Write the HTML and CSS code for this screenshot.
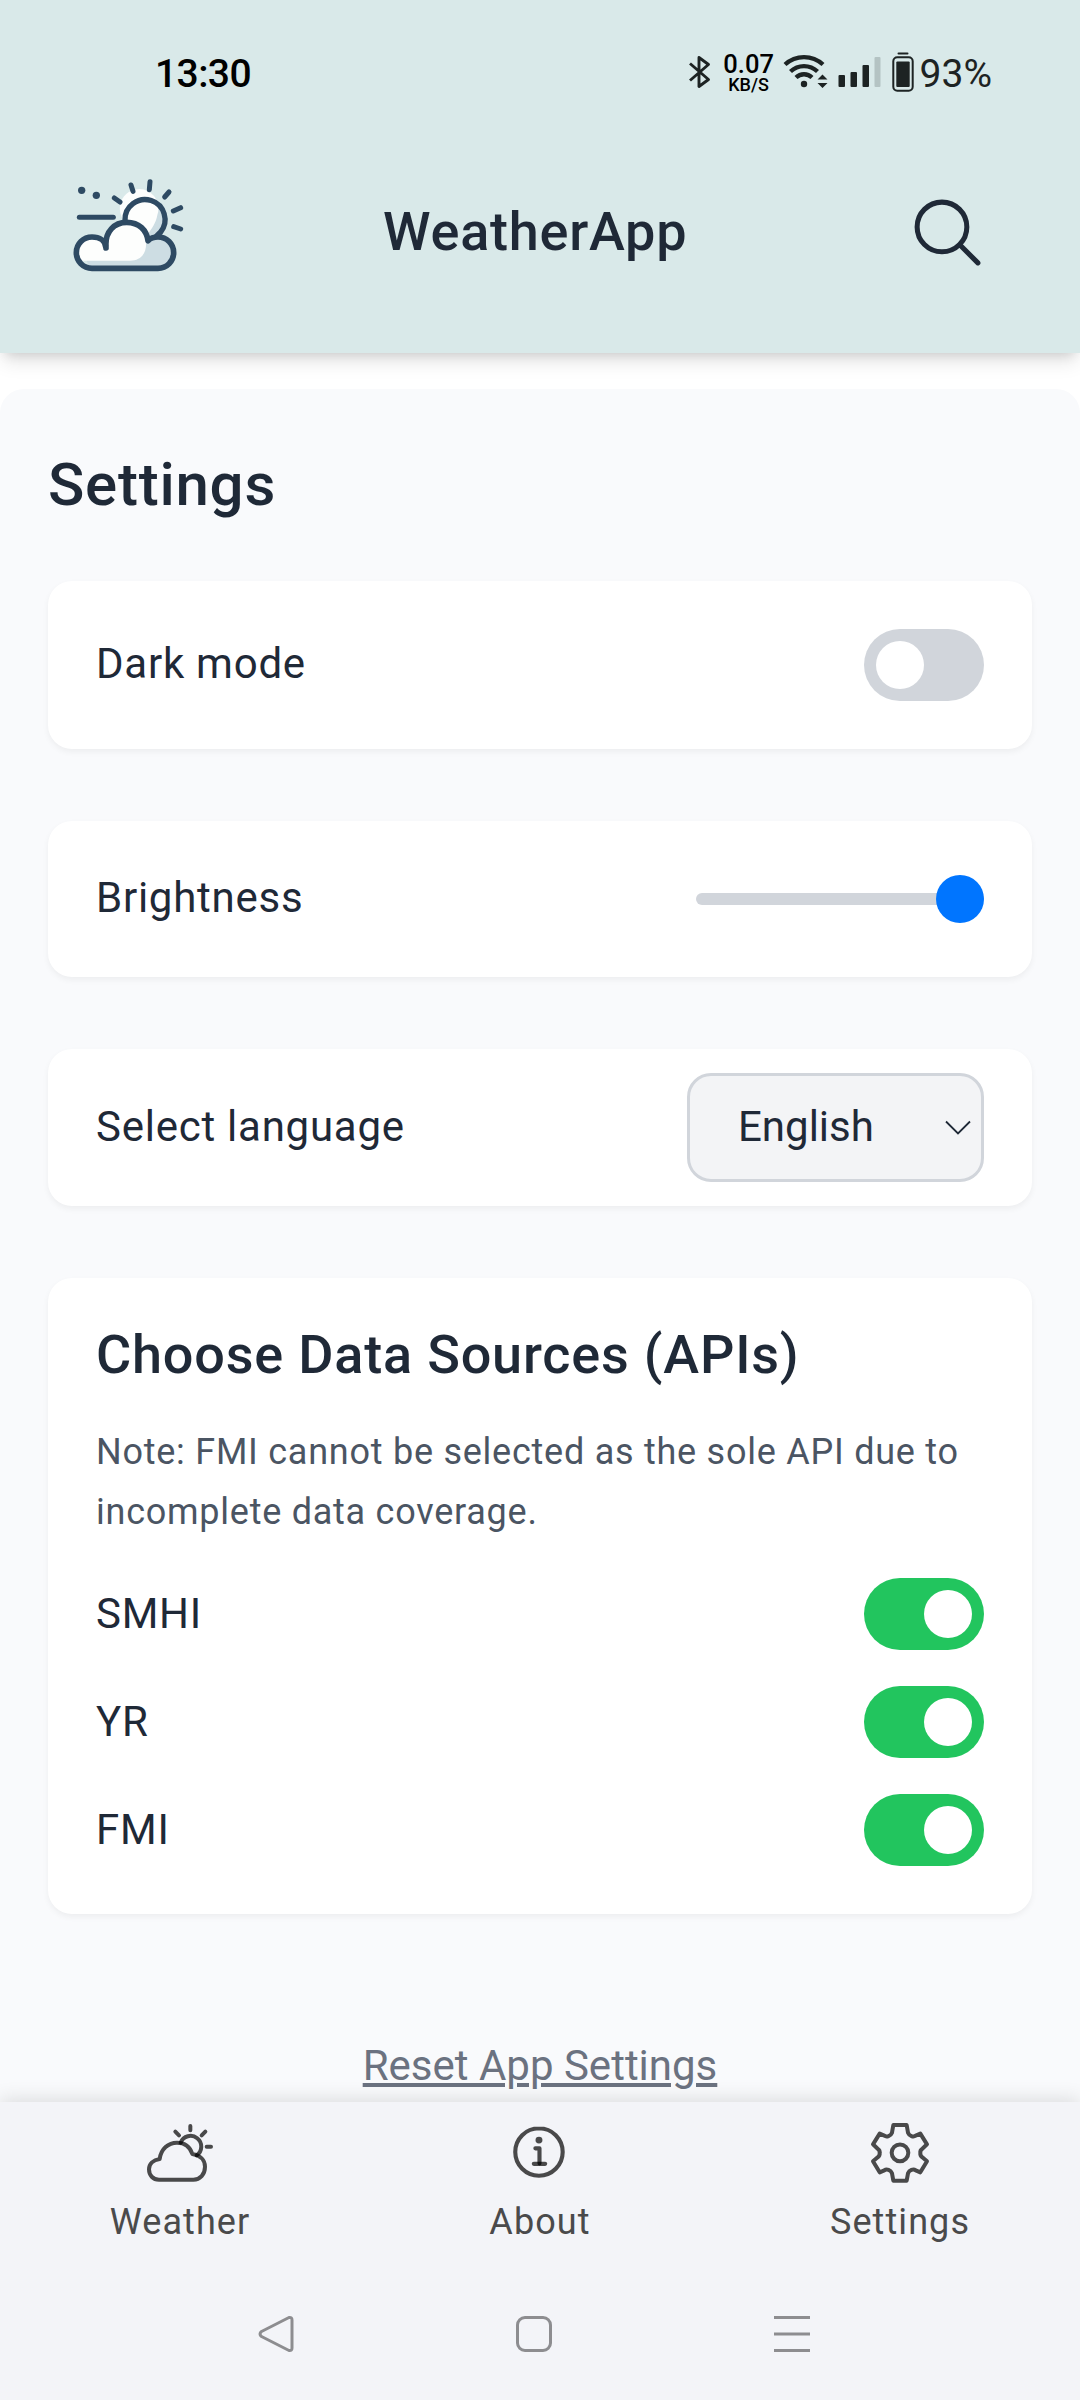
FILE: index.html
```html
<!DOCTYPE html>
<html lang="en">
<head>
<meta charset="utf-8">
<title>WeatherApp</title>
<link rel="stylesheet" href="styles.css">
</head>
<body>
<div class="app">
  <header class="header">
    <div class="status">
      <span class="time">13:30</span>
      <div class="indicators">
        <svg class="bluetooth" width="24" height="36" viewBox="0 0 24 36" fill="none" stroke="#1d2323" stroke-width="2.900" stroke-linejoin="round"><path d="M2 9.500 20.500 25.500 11 32.500V3.500L20.500 10.500 2 26.500"/></svg>
        <div class="rate"><span class="rate-value">0.07</span><span class="rate-unit">KB/S</span></div>
        <svg class="wifi" width="46" height="36" viewBox="0 0 46 36" fill="none" stroke="#1d2323" stroke-width="4.300"><path d="M2 11.500A28 28 0 0 1 40 11.500M7.500 18.500A19.500 19.500 0 0 1 34.500 18.500M13 24.500A11.500 11.500 0 0 1 29 24.500"/><circle cx="21" cy="31" r="3.200" fill="#1d2323" stroke="none"/><path d="M34.500 26.500 39.500 21.500 44.500 26.500ZM34.500 30 39.500 35 44.500 30Z" fill="#1d2323" stroke="none"/></svg>
        <svg class="signal" width="44" height="32" viewBox="0 0 44 32" fill="#1d2323"><rect x="0.500" y="19" width="6.500" height="12" rx="1"/><rect x="12.500" y="16" width="6.500" height="15" rx="1"/><rect x="24.500" y="9" width="6.500" height="22" rx="1"/><rect x="36.500" y="1" width="6" height="30" rx="1" fill="#b4c3c3"/></svg>
        <svg class="battery" width="22" height="40" viewBox="0 0 22 40"><rect x="5.500" y="0.500" width="11" height="2" rx="1" fill="#1d2323"/><rect x="1.300" y="5.300" width="19.400" height="33.400" rx="4" fill="none" stroke="#1d2323" stroke-width="2"/><rect x="4.300" y="9.500" width="13.400" height="25.500" rx="1" fill="#1d2323"/></svg>
        <span class="percent">93%</span>
      </div>
    </div>
    <div class="topbar">
      <svg class="logo" viewBox="0 0 480 390" fill="none" stroke="#2e4a63" stroke-width="17" stroke-linecap="round" stroke-linejoin="round">
        <circle cx="283" cy="177" r="62" fill="#cddde3" stroke="none"/>
        <path d="M225 185A58 58 0 1 1 322 165C318 190 304 207 294 222Z" fill="#fdfefd" stroke="none"/>
        <path d="M294 242C302 233 312 230 324 230A47 47 0 0 1 324 325H124A47 47 0 0 1 167 245C170 211 194 187 230 187C268 187 290 211 294 242Z" fill="#cddde3" stroke="none"/>
        <path d="M85 302C70 264 93 233 124 232C145 232 158 242 167 255C166 213 190 187 230 187C260 187 280 203 288 243C291 276 276 302 240 302Z" fill="#fdfefd" stroke="none"/>
        <path d="M168 264C167 242 148 231 126 231A47 47 0 0 0 126 325H324A47 47 0 0 0 324 231C312 231 302 234 294 242C290 211 268 187 230 187C193 187 165 215 168 258"/>
        <path d="M225 181A60 60 0 1 1 332 216L320 228" stroke-width="16"/>
        <path d="M88 172H190" stroke-width="15"/>
        <path d="M193 114 210 126M243 75 249 94M300 65 298 89M357 96 344 111M392 143 370 153M371 200 392 207" stroke-width="15"/>
        <circle cx="95" cy="91" r="11" fill="#2e4a63" stroke="none"/><circle cx="139" cy="106" r="11" fill="#2e4a63" stroke="none"/>
      </svg>
      <h1 class="brand">WeatherApp</h1>
      <svg class="search" viewBox="0 0 512 512" fill="none" stroke="#1f2937" stroke-width="32" stroke-linecap="round"><circle cx="221.100" cy="221.100" r="157.100"/><path d="M338.300 338.300 448 448"/></svg>
    </div>
  </header>

  <main class="panel">
    <h2 class="page-title">Settings</h2>
    <section class="card row">
      <span class="label">Dark mode</span>
      <span class="toggle"><span class="knob"></span></span>
    </section>
    <section class="card row">
      <span class="label">Brightness</span>
      <span class="slider"><span class="thumb"></span></span>
    </section>
    <section class="card row language">
      <span class="label">Select language</span>
      <div class="select"><span class="value">English</span>
        <svg width="26" height="16" viewBox="0 0 26 16" fill="none" stroke="#1f2937" stroke-width="1.800"><path d="M1 1.500 13 13.500 25 1.500"/></svg>
      </div>
    </section>
    <section class="card sources">
      <h3 class="card-title">Choose Data Sources (APIs)</h3>
      <p class="note">Note: FMI cannot be selected as the sole API due to incomplete data coverage.</p>
      <div class="source-list">
        <div class="row"><span class="label">SMHI</span><span class="toggle on"><span class="knob"></span></span></div>
        <div class="row"><span class="label">YR</span><span class="toggle on"><span class="knob"></span></span></div>
        <div class="row"><span class="label">FMI</span><span class="toggle on"><span class="knob"></span></span></div>
      </div>
    </section>
    <a class="reset">Reset App Settings</a>
  </main>

  <footer class="bottom">
    <nav class="tabs">
      <div class="tab">
        <svg class="tab-icon" viewBox="201 120 198 198"><path d="M340 299H237C219 299 207 286 207 268C207 251 220 240 239 237C243 207 265 188 291 188C316 188 331 203 337 222C361 226 375 240 375 260C375 283 360 299 340 299Z"/><path d="M302 188A32 32 0 1 1 350 226"/><path d="M331 138V151M286 155 297 166M376 155 365 166M380 200H393"/></svg>
        <span>Weather</span>
      </div>
      <div class="tab">
        <svg class="tab-icon about" viewBox="0 0 512 512"><path d="M248 64C146.400 64 64 146.400 64 248s82.400 184 184 184 184-82.400 184-184S349.600 64 248 64z"/><path d="M220 220h32v116"/><path d="M208 340h88"/><circle class="dot" cx="248" cy="156" r="27"/></svg>
        <span>About</span>
      </div>
      <div class="tab">
        <svg class="tab-icon" viewBox="921 120 198 198"><path d="M1000 135H1040Q1043 152 1044 158C1048 168 1060 172 1067 167L1081 161 1101 193 1087 206Q1080 210 1081 219Q1080 227 1087 232L1101 244 1081 277 1067 271C1060 266 1048 270 1044 280L1040 302H1000L996 280C992 270 980 266 973 271L959 277 939 244 953 232Q960 227 959 219Q960 210 953 206L939 193 959 161 973 167C980 172 992 168 996 158Z"/><circle cx="1020" cy="218.500" r="25"/></svg>
        <span>Settings</span>
      </div>
    </nav>
    <div class="system">
      <svg width="36" height="38" viewBox="0 0 36 38"><path d="M31 2.500 3.500 16.500Q0.500 19 3.500 21.500L31 35.500Q34 36 34 33V5Q34 2 31 2.500Z"/></svg>
      <svg width="36" height="36" viewBox="0 0 36 36"><rect x="1.500" y="1.500" width="33" height="33" rx="7.500"/></svg>
      <svg width="36" height="36" viewBox="0 0 36 36"><path d="M0 1.500H36M0 18H36M0 34.500H36"/></svg>
    </div>
  </footer>
</div>
</body>
</html>
```
FILE: styles.css
```css
* { box-sizing: border-box; }
body {
  margin: 0;
  background: #fff;
  font-family: Roboto, "Noto Sans", sans-serif;
  color: #1f2937;
}
h1, h2, h3, p { margin: 0; }
h1, h2, h3 { font-weight: 500; }
svg { display: block; flex: none; }

.app { display: flex; flex-direction: column; width: 1080px; height: 2400px; overflow: hidden; }

.header {
  flex: none;
  height: 353px;
  background: #d9e9e9;
  box-shadow: 0 12px 18px -3px rgba(0, 0, 0, .1), 0 6px 12px -6px rgba(0, 0, 0, .16);
}
.status {
  display: flex;
  justify-content: space-between;
  height: 144px;
  padding: 0 88px 0 155px;
}
.time { margin-top: 51px; font-size: 39px; line-height: 46px; font-weight: 500; letter-spacing: -.600px; color: #000; }
.indicators { display: flex; align-items: flex-start; color: #1d2323; }
.bluetooth { margin-top: 54px; }
.rate { display: flex; flex-direction: column; align-items: center; width: 50px; margin: 52px 9px 0 12px; color: #000; font-weight: 500; }
.rate-value { font-size: 25.500px; line-height: 25px; }
.rate-unit { font-size: 18px; line-height: 15px; }
.wifi { margin: 53px 9px 0 0; }
.signal { margin: 56px 10px 0 0; }
.battery { margin: 52px 6px 0 0; }
.percent { margin-top: 51px; font-size: 39px; line-height: 46px; }

.topbar { display: flex; align-items: flex-start; padding: 16px 92px 0 50px; }
.logo { width: 160px; height: 130px; }
.brand { margin: 40px 0 0 173px; font-size: 54px; line-height: 64px; letter-spacing: .750px; }
.search { width: 81px; height: 81px; margin: 32px 0 0 auto; }

.panel {
  display: flex;
  flex-direction: column;
  flex: 1;
  min-height: 0;
  margin-top: 36px;
  padding: 48px 48px 0;
  background: #f9fafc;
  border-radius: 24px 24px 0 0;
}
.page-title { margin: 6px 0 54px; font-size: 60px; line-height: 84px; letter-spacing: .750px; }
.card {
  flex: none;
  margin-bottom: 72px;
  padding: 48px;
  background: #fff;
  border-radius: 24px;
  box-shadow: 0 3px 6px rgba(0, 0, 0, .05);
}
.row { display: flex; align-items: center; justify-content: space-between; }
.label { padding-bottom: 2px; font-size: 42px; line-height: 58px; letter-spacing: .750px; }
.source-list .label { padding-bottom: 0; }

.toggle { display: flex; width: 120px; height: 72px; padding: 12px; border-radius: 36px; background: #d1d5db; }
.toggle.on { justify-content: flex-end; background: #22c55e; }
.knob { width: 48px; height: 48px; border-radius: 50%; background: #fff; }

.slider { display: flex; align-items: center; justify-content: flex-end; width: 288px; height: 12px; border-radius: 6px; background: #d1d5db; }
.thumb { flex: none; width: 48px; height: 48px; border-radius: 50%; background: #0075ff; }

.language { padding-top: 24px; padding-bottom: 24px; }
.select {
  display: flex;
  align-items: center;
  justify-content: space-between;
  width: 297px;
  height: 109px;
  padding: 0 10px 0 48px;
  border: 3px solid #d1d5db;
  border-radius: 24px;
  background: #f3f4f6;
  font-size: 42px;
}
.value { padding-bottom: 2px; line-height: 58px; }

.card-title { margin-bottom: 36px; padding-bottom: 2px; font-size: 54px; line-height: 58px; letter-spacing: .800px; }
.note { margin-bottom: 36px; font-size: 36px; line-height: 60px; letter-spacing: .750px; color: #4b5563; }
.source-list { display: flex; flex-direction: column; gap: 36px; }
.reset {
  align-self: center;
  margin-top: 50px;
  font-size: 42px;
  line-height: 60px;
  color: #6b7280;
  text-decoration: underline;
  text-decoration-thickness: 4px;
  text-underline-offset: 3px;
}

.bottom {
  z-index: 1;
  flex: none;
  height: 298px;
  background: #f3f4f8;
  box-shadow: 0 -3px 18px rgba(0, 0, 0, .12);
}
.tabs { display: grid; grid-template-columns: repeat(3, 1fr); padding-top: 18px; }
.tab { display: flex; flex-direction: column; align-items: center; gap: 12px; font-size: 36px; line-height: 48px; letter-spacing: 1.080px; color: #4a4a4b; }
.tab-icon { width: 66px; height: 66px; overflow: visible; fill: none; stroke: rgba(0, 0, 0, .7); stroke-width: 12; stroke-linecap: round; stroke-linejoin: round; }
.about { stroke-width: 32; }
.dot { fill: rgba(0, 0, 0, .7); stroke: none; }
.system { display: flex; align-items: center; justify-content: space-between; margin-top: 69px; padding: 0 270px 0 258px; }
.system svg { fill: none; stroke: #8d8d90; stroke-width: 3; stroke-linejoin: round; }
```
